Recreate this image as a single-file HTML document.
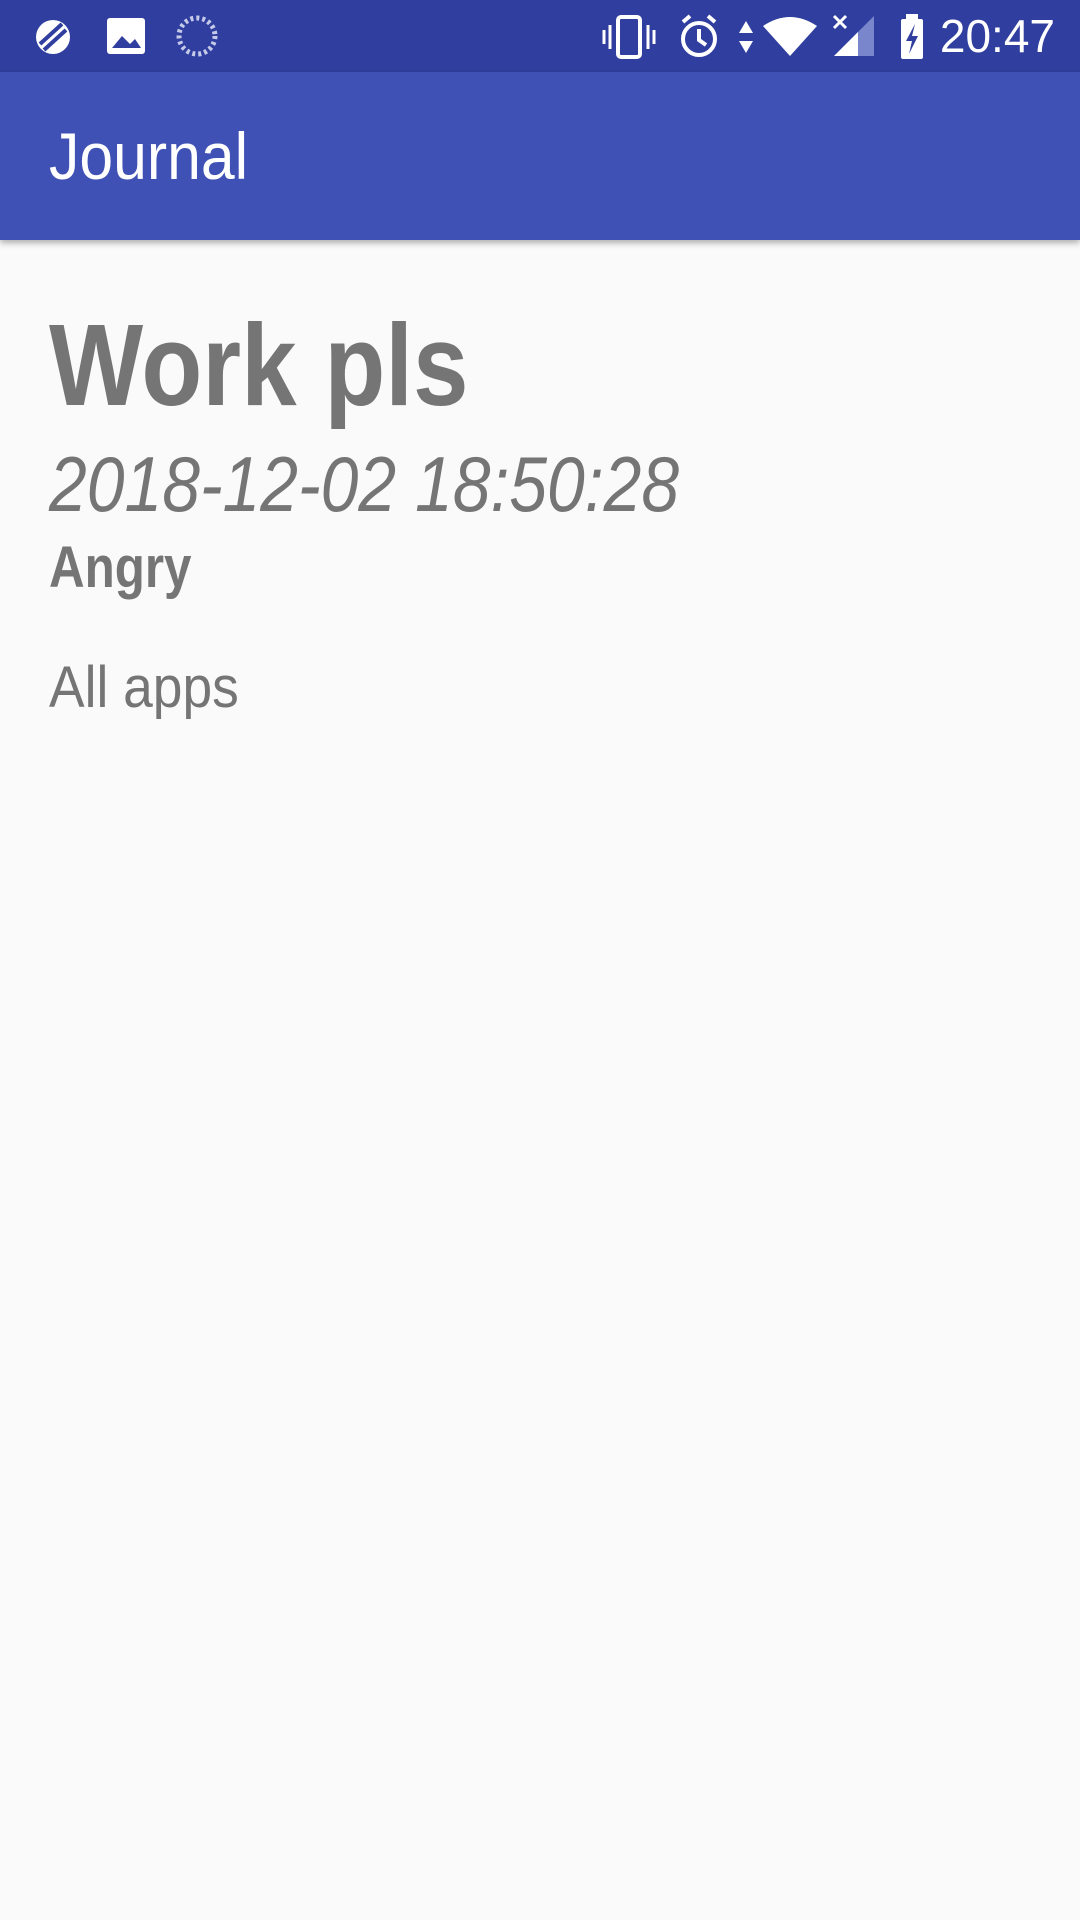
<!DOCTYPE html>
<html><head><meta charset="utf-8"><style>
html,body{margin:0;padding:0}
body{width:1080px;height:1920px;background:#fafafa;position:relative;overflow:hidden;font-family:"Liberation Sans",sans-serif}
.t{position:absolute;left:49px;white-space:nowrap;line-height:1;transform-origin:left top;color:#757575}
</style></head><body>
<div style="position:absolute;left:0;top:0;width:1080px;height:72px;background:#303f9f"></div>
<div style="position:absolute;left:0;top:72px;width:1080px;height:168px;background:#3f51b5;box-shadow:0 3px 6px rgba(0,0,0,.3)"></div>
<svg style="position:absolute;left:0;top:0" width="1080" height="72">
 <circle cx="53" cy="37" r="17" fill="#fff"/>
 <path d="M40 44 L62 24 M44 50 L66 30" stroke="#303f9f" stroke-width="4"/>
 <rect x="107" y="18" width="38" height="36" rx="3" fill="#fff"/>
 <path d="M112 48 L122 36 L130 44 L135 39 L141 48 Z" fill="#303f9f"/>
 <circle cx="197" cy="36" r="18" fill="none" stroke="#c5cae9" stroke-width="5" stroke-dasharray="3 3"/>
 <rect x="618" y="17" width="22" height="40" rx="3" fill="none" stroke="#fff" stroke-width="4"/>
 <path d="M610 25v24M604 30v14M648 25v24M654 30v14" stroke="#fff" stroke-width="3"/>
 <circle cx="699" cy="39" r="16" fill="none" stroke="#fff" stroke-width="4"/>
 <path d="M699 29v11l7 5M683 22l7-6M715 22l-7-6" stroke="#fff" stroke-width="4" fill="none"/>
 <path d="M739 33l7-12 7 12zM739 41l7 12 7-12z" fill="#fff"/>
 <path d="M763 26 Q790 8 817 26 L790 56 Z" fill="#fff"/>
 <path d="M834 56 L874 16 L874 56 Z" fill="#7986cb"/>
 <path d="M834 56 L858 32 L858 56 Z" fill="#fff"/>
 <path d="M834 16l12 12M846 16l-12 12" stroke="#fff" stroke-width="3"/>
 <rect x="901" y="19" width="22" height="40" rx="2" fill="#fff"/><rect x="906" y="14" width="12" height="6" fill="#fff"/>
 <path d="M915 24 L906 41 L912 41 L909 54 L918 36 L912 36 Z" fill="#303f9f"/>
 <text x="1055" y="52" text-anchor="end" fill="#fff" font-size="46" font-family="Liberation Sans">20:47</text>
</svg>
<div class="t" style="top:123px;font-size:66px;color:#fff;transform:scaleX(.92)">Journal</div>
<div class="t" style="top:307px;font-size:116px;font-weight:bold;transform:scaleX(.86)">Work pls</div>
<div class="t" style="top:445px;font-size:78px;font-style:italic;transform:scaleX(.87)">2018-12-02 18:50:28</div>
<div class="t" style="top:539px;font-size:58px;font-weight:bold;transform:scaleX(.85)">Angry</div>
<div class="t" style="top:659px;font-size:58px;transform:scaleX(.92)">All apps</div>
</body></html>
